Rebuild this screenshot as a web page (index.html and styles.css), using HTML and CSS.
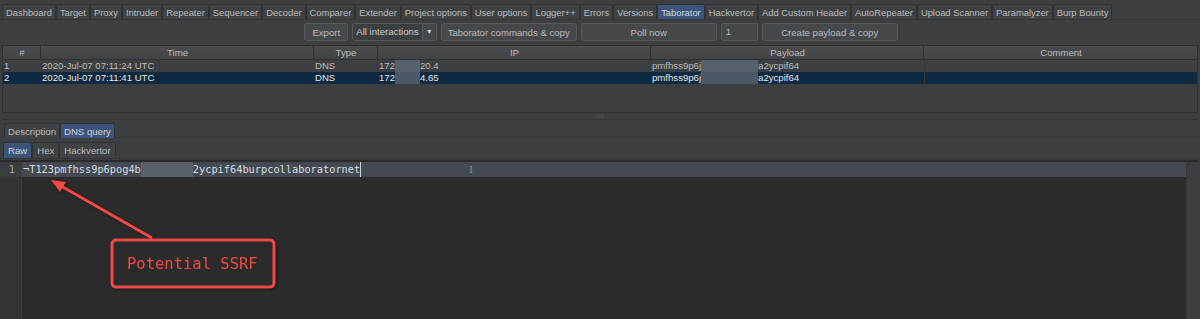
FILE: index.html
```html
<!DOCTYPE html>
<html lang="en">
<head>
    <meta charset="UTF-8">
    <title>Burp Suite - Taborator</title>
    <link rel="stylesheet" href="styles.css">
</head>
<body>

<!-- Main tool tabs -->
<div class="main-tabs">
    <div class="tab">Dashboard</div>
    <div class="tab">Target</div>
    <div class="tab">Proxy</div>
    <div class="tab">Intruder</div>
    <div class="tab">Repeater</div>
    <div class="tab">Sequencer</div>
    <div class="tab">Decoder</div>
    <div class="tab">Comparer</div>
    <div class="tab">Extender</div>
    <div class="tab">Project options</div>
    <div class="tab">User options</div>
    <div class="tab">Logger++</div>
    <div class="tab">Errors</div>
    <div class="tab">Versions</div>
    <div class="tab active">Taborator</div>
    <div class="tab">Hackvertor</div>
    <div class="tab">Add Custom Header</div>
    <div class="tab">AutoRepeater</div>
    <div class="tab">Upload Scanner</div>
    <div class="tab">Paramalyzer</div>
    <div class="tab">Burp Bounty</div>
</div>

<!-- Toolbar -->
<div class="toolbar">
    <button class="btn btn-export">Export</button>
    <div class="combo">
        <span class="combo-label">All interactions</span>
        <span class="combo-arrow">&#9660;</span>
    </div>
    <button class="btn btn-wide">Taborator commands &amp; copy</button>
    <button class="btn btn-poll">Poll now</button>
    <div class="field">1</div>
    <button class="btn btn-wide">Create payload &amp; copy</button>
</div>

<!-- Interactions table -->
<div class="grid">
    <div class="row head">
        <div class="cell c-num">#</div>
        <div class="cell c-time">Time</div>
        <div class="cell c-type">Type</div>
        <div class="cell c-ip">IP</div>
        <div class="cell c-payload">Payload</div>
        <div class="cell c-comment">Comment</div>
    </div>
    <div class="row">
        <div class="cell c-num">1</div>
        <div class="cell c-time">2020-Jul-07 07:11:24 UTC</div>
        <div class="cell c-type">DNS</div>
        <div class="cell c-ip">172<span class="blur ip-blur"></span>20.4</div>
        <div class="cell c-payload">pmfhss9p6j<span class="blur pay-blur"></span>a2ycpif64</div>
        <div class="cell c-comment"></div>
    </div>
    <div class="row selected">
        <div class="cell c-num">2</div>
        <div class="cell c-time">2020-Jul-07 07:11:41 UTC</div>
        <div class="cell c-type">DNS</div>
        <div class="cell c-ip">172<span class="blur ip-blur"></span>4.65</div>
        <div class="cell c-payload">pmfhss9p6j<span class="blur pay-blur"></span>a2ycpif64</div>
        <div class="cell c-comment"></div>
    </div>
</div>

<div class="splitter"><span>::::::</span></div>

<!-- Details -->
<div class="sub-tabs">
    <div class="tab">Description</div>
    <div class="tab active">DNS query</div>
</div>
<div class="sub-tabs view-tabs">
    <div class="tab active">Raw</div>
    <div class="tab">Hex</div>
    <div class="tab">Hackvertor</div>
</div>

<div class="editor">
    <div class="editor-main">
        <div class="gutter">
            <div class="line-no">1</div>
        </div>
        <div class="text-area">
            <div class="line">¬T123pmfhss9p6pog4b<span class="blur code-blur"></span>2ycpif64burpcollaboratornet<span class="caret"></span><span class="ibeam">I</span></div>
        </div>
    </div>
    <div class="scrollbar"></div>
</div>

<!-- Annotation -->
<svg class="annotation" width="1200" height="319" viewBox="0 0 1200 319">
    <line x1="152" y1="238" x2="61" y2="186" stroke="#f24848" stroke-width="3"/>
    <polygon points="51,180 66,182 60,192" fill="#f24848"/>
    <rect x="112" y="240" width="162" height="47" rx="4" fill="#2b2b2b" stroke="#f24848" stroke-width="3"/>
    <text x="127" y="269" class="note">Potential SSRF</text>
</svg>

</body>
</html>
```

FILE: styles.css
```css
* {
    margin: 0;
    padding: 0;
    box-sizing: border-box;
}

body {
    font-family: "Liberation Sans", Arial, sans-serif;
    font-size: 9.6px;
    color: #bbbbbb;
    background-color: #3c3f41;
    width: 1200px;
    height: 319px;
    overflow: hidden;
    position: relative;
}

/* Tabs */
.main-tabs {
    display: flex;
    padding: 4px 0 0 2px;
    height: 20px;
    border-bottom: 1px solid #333537;
    font-size: 9.4px;
}

.tab {
    padding: 1px 3px 0 3px;
    height: 15px;
    line-height: 14px;
    background-color: #3f4244;
    border: 1px solid #2f3133;
    border-bottom: none;
    border-radius: 2px 2px 0 0;
    white-space: nowrap;
}

.tab.active {
    background-color: #3b5478;
    color: #d0d6de;
}

/* Toolbar */
.toolbar {
    display: flex;
    justify-content: center;
    align-items: center;
    gap: 4px;
    height: 24px;
    padding-left: 2px;
}

.btn {
    font-family: inherit;
    font-size: 9.6px;
    color: #bbbbbb;
    height: 18px;
    background-color: #45494b;
    border: 1px solid #55585a;
    border-radius: 3px;
}

.btn-export {
    width: 44px;
}

.btn-wide {
    width: 136px;
}

.btn-poll {
    width: 136px;
}

.combo {
    display: flex;
    height: 18px;
    border: 1px solid #55585a;
    border-radius: 3px;
    background-color: #3c3f41;
}

.combo-label {
    padding: 0 3px;
    line-height: 16px;
    color: #c8c8c8;
}

.combo-arrow {
    width: 14px;
    font-size: 7px;
    line-height: 16px;
    text-align: center;
    color: #d0d0d0;
    border-left: 1px solid #55585a;
    background-color: #45494b;
}

.field {
    width: 37px;
    height: 18px;
    line-height: 16px;
    padding-left: 4px;
    border: 1px solid #55585a;
    border-radius: 2px;
    background-color: #45494b;
}

/* Table */
.grid {
    margin: 1px 2px 0 2px;
    height: 68px;
    border: 1px solid #2e3032;
    background-color: #3c3f41;
}

.row {
    display: flex;
    height: 12px;
    line-height: 12px;
}

.row.head {
    height: 14px;
    line-height: 14px;
    background: linear-gradient(#4a4d4f, #414446);
    border-bottom: 1px solid #2e3032;
}

.row.head .cell {
    text-align: center;
    border-right: 1px solid #2e3032;
}

.row.selected {
    background-color: #0e2a42;
    color: #e6e6e6;
}

.cell {
    padding-left: 1px;
    white-space: nowrap;
    overflow: hidden;
}

.c-num { width: 38px; }
.c-time { width: 273px; }
.c-type { width: 64px; }
.c-ip { width: 273px; }
.c-payload { width: 273px; }
.c-comment { flex: 1; border-left: 1px solid #35383a; }

.row.head .c-comment { border-left: none; border-right: none; }

.blur {
    display: inline-block;
    vertical-align: top;
    background-color: #56616c;
}

.row.selected .blur {
    background-color: #4b5866;
}

.ip-blur {
    width: 25px;
    height: 12px;
}

.pay-blur {
    width: 57px;
    height: 12px;
}

/* Splitter */
.splitter {
    height: 7px;
    margin: 0 2px;
    border-bottom: 1px solid #333537;
    text-align: center;
    font-size: 5px;
    line-height: 6px;
    color: #9a9a9a;
}

/* Detail tabs */
.sub-tabs {
    display: flex;
    padding: 3px 0 0 4px;
    height: 18px;
    border-bottom: 1px solid #333537;
}

.view-tabs {
    padding: 4px 0 0 3px;
    height: 21px;
}

.view-tabs .tab {
    height: 16px;
    line-height: 16px;
    padding: 0 4px;
}

/* Editor */
.editor {
    display: flex;
    margin: 1px 2px 0 0;
    height: 160px;
    border-top: 2px solid #2b2b2b;
}

.editor-main {
    flex: 1;
    display: flex;
    background-color: #2b2b2b;
}

.gutter {
    width: 22px;
    background-color: #313335;
    border-right: 1px solid #3d4042;
}

.line-no {
    height: 15px;
    line-height: 15px;
    padding-right: 6px;
    text-align: right;
    font-family: "DejaVu Sans Mono", monospace;
    font-size: 10.3px;
    color: #a0a0a0;
    background-color: #3a3d40;
}

.text-area {
    flex: 1;
}

.line {
    position: relative;
    height: 15px;
    line-height: 15px;
    padding-left: 1px;
    font-family: "DejaVu Sans Mono", monospace;
    font-size: 10.3px;
    color: #d8dde3;
    background-color: #454a52;
    white-space: pre;
}

.code-blur {
    width: 52px;
    height: 15px;
    background-color: #5a6068;
}

.caret {
    display: inline-block;
    vertical-align: top;
    width: 1px;
    height: 15px;
    background-color: #d0d0d0;
}

.ibeam {
    position: absolute;
    left: 447px;
    top: 0;
    font-family: "DejaVu Serif", serif;
    font-size: 10px;
    color: #8a8d90;
}

.scrollbar {
    width: 12px;
    background-color: #3c3f41;
    border-left: 1px solid #353739;
}

/* Annotation overlay */
.annotation {
    position: absolute;
    left: 0;
    top: 0;
    pointer-events: none;
    filter: drop-shadow(1px 1px 1px rgba(0, 0, 0, 0.5));
}

.note {
    font-family: "DejaVu Sans Mono", monospace;
    font-size: 15.5px;
    fill: #f04848;
}
```
